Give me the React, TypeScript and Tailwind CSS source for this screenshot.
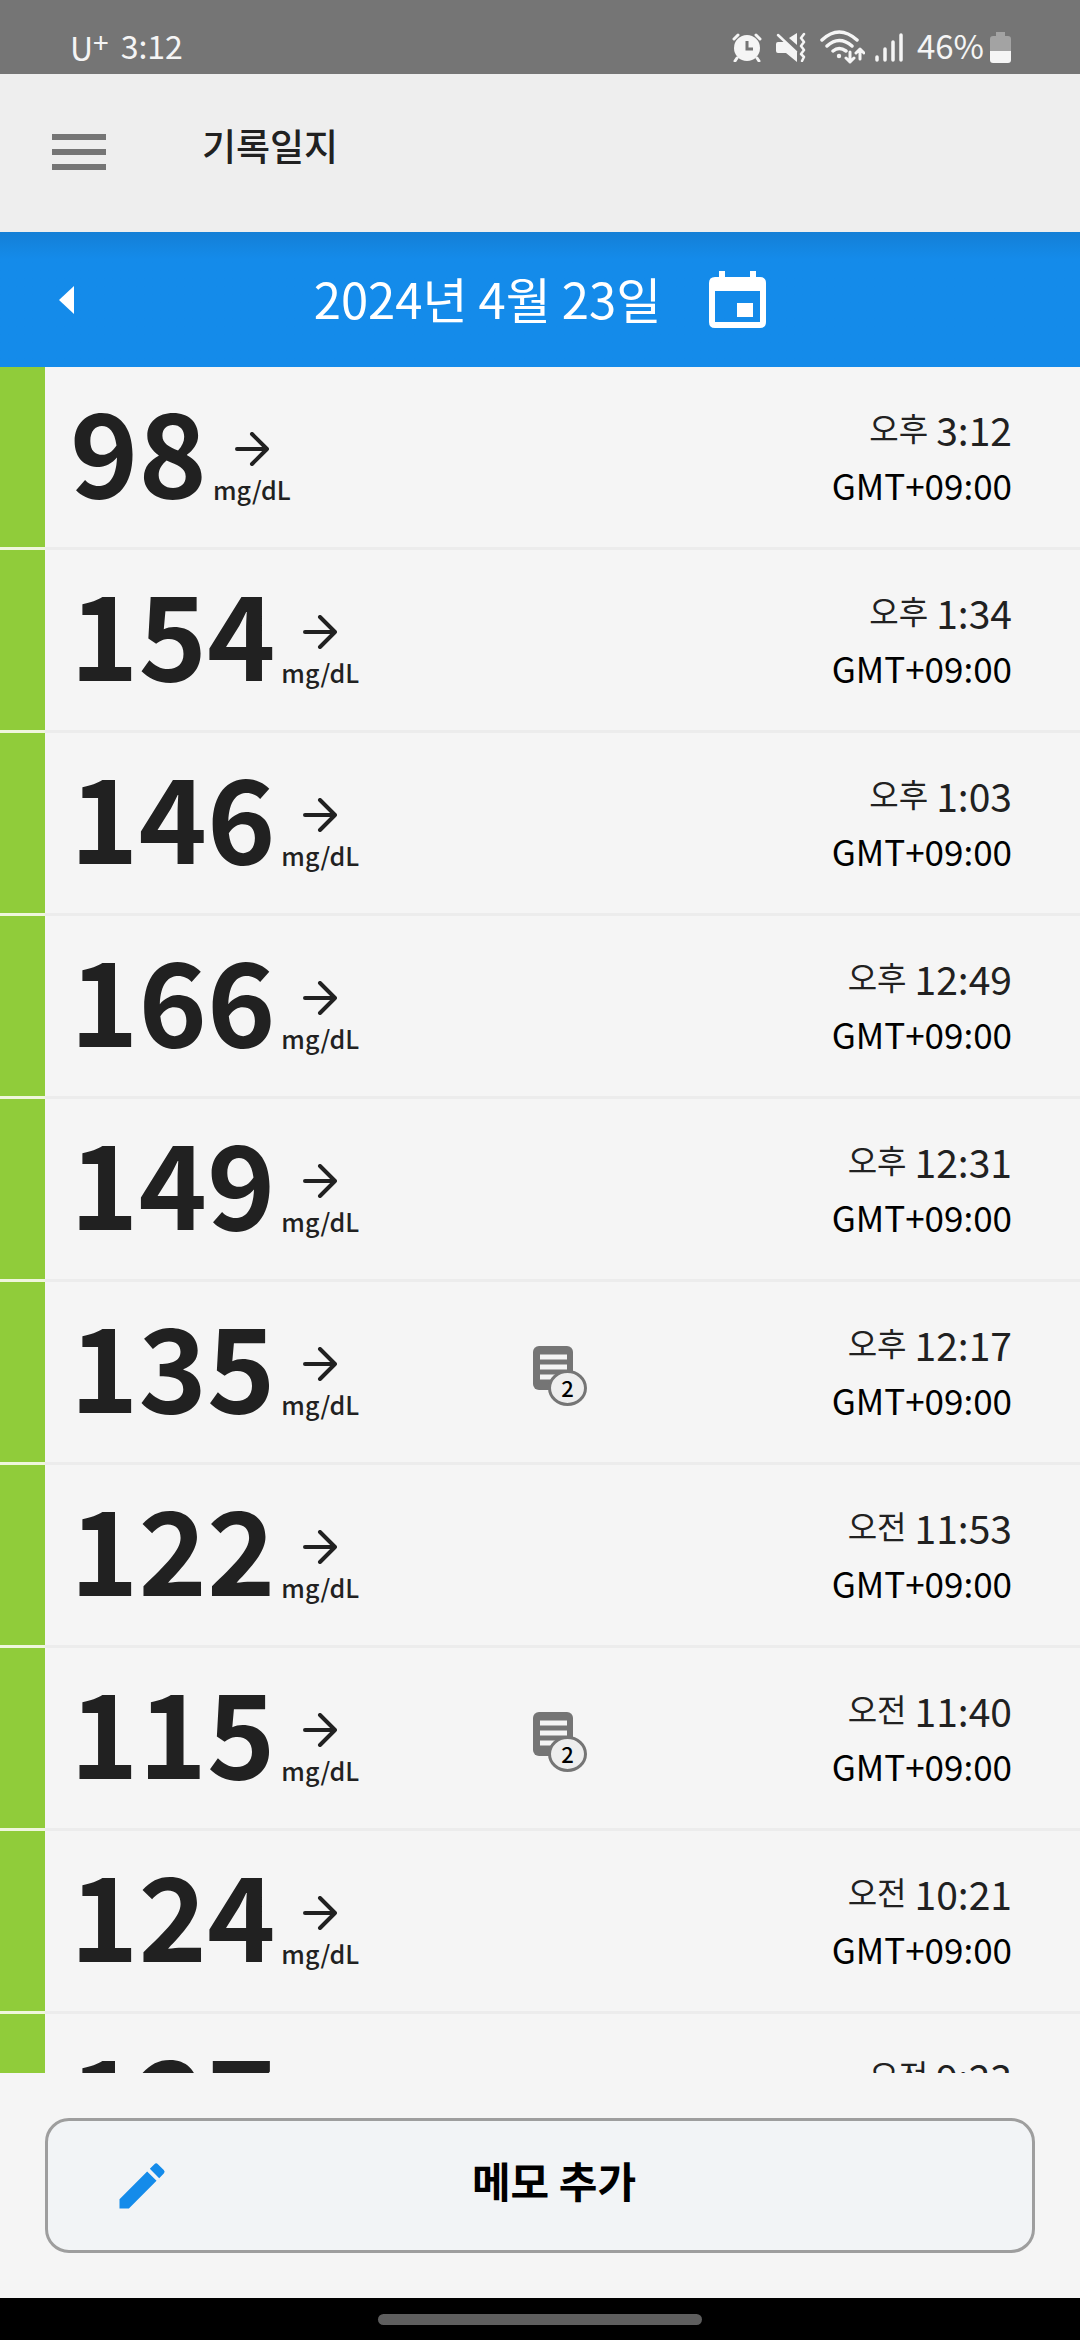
import { MdEdit } from "react-icons/md";

type Reading = {
  value: number;
  period: "오전" | "오후";
  time: string;
  notes?: number;
};

const READINGS: Reading[] = [
  { value: 98, period: "오후", time: "3:12" },
  { value: 154, period: "오후", time: "1:34" },
  { value: 146, period: "오후", time: "1:03" },
  { value: 166, period: "오후", time: "12:49" },
  { value: 149, period: "오후", time: "12:31" },
  { value: 135, period: "오후", time: "12:17", notes: 2 },
  { value: 122, period: "오전", time: "11:53" },
  { value: 115, period: "오전", time: "11:40", notes: 2 },
  { value: 124, period: "오전", time: "10:21" },
  { value: 127, period: "오전", time: "9:23" },
];

// ── Icons ────────────────────────────────────────────────────────────────────
function AlarmIcon() {
  return (
    <svg width="30" height="30" viewBox="0 0 30 30" fill="none" stroke="#f5f5f5" strokeLinecap="round">
      <circle cx="15" cy="16" r="13" fill="#f5f5f5" stroke="none" />
      <path d="M2 7l4-4M28 7l-4-4M5 26l-2 3M25 26l2 3" strokeWidth="3" />
      <path d="M15 9v8h6" stroke="#757575" strokeWidth="3" strokeLinecap="butt" />
    </svg>
  );
}

function MuteVibrateIcon() {
  return (
    <svg width="30" height="30" viewBox="0 0 30 30" fill="#f5f5f5">
      <path d="M0 12q0-2 2-2h7l12 10v10L10 21H2q-2 0-2-2z" />
      <path d="M21 1v12l-8-7z" />
      <path d="M2 3l18 17" stroke="#f5f5f5" strokeWidth="2.5" strokeLinecap="round" />
      <path d="M28 2l-3 4 3 4-3 4 3 4-3 4 3 3-2 4" fill="none" stroke="#f5f5f5" strokeWidth="2.5" strokeLinecap="round" strokeLinejoin="round" />
    </svg>
  );
}

function WifiIcon() {
  return (
    <svg width="45" height="34" viewBox="0 0 45 34" fill="none" stroke="#f5f5f5" strokeWidth="3.5" strokeLinecap="round" strokeLinejoin="round">
      <path d="M2 10q17-16 35 0M7 16q12-11 25 0M13 21q6-5 13 0" />
      <circle cx="19" cy="26" r="2.2" fill="#f5f5f5" stroke="none" />
      <path d="M30 22v10M26 28l4 4 4-4M40 29V19M36 23l4-4 4 4" strokeWidth="3" />
    </svg>
  );
}

function SignalIcon() {
  return (
    <svg width="28" height="30" viewBox="0 0 28 30" stroke="#f5f5f5" strokeWidth="3.5" strokeLinecap="round">
      <path d="M2 25v3M10 17v11M18 10v18M26 3v25" />
    </svg>
  );
}

function BatteryIcon() {
  return (
    <svg width="21" height="31" viewBox="0 0 21 31">
      <path d="M6 0h9v4h3q3 0 3 3v12H0V7q0-3 3-3h3z" fill="#a3a3a3" />
      <path d="M0 19h21v9q0 3-3 3H3q-3 0-3-3z" fill="#f5f5f5" />
    </svg>
  );
}

function CalendarIcon() {
  return (
    <svg width="57" height="58" viewBox="0 0 57 58" fill="#fff">
      <path d="M10 0h6v6h25V0h6v6h4q6 0 6 6v39q0 6-6 6H6q-6 0-6-6V12q0-6 6-6h4zM6 20v31h45V20z" fillRule="evenodd" />
      <path d="M28 32h16v14H28z" />
    </svg>
  );
}

function TrendArrow() {
  return (
    <svg width="34" height="34" viewBox="0 0 34 34" fill="none" stroke="#212121" strokeWidth="4" strokeLinecap="round" strokeLinejoin="round">
      <path d="M2 17h30M17 2l15 15-15 15" />
    </svg>
  );
}

function NotesIcon({ count }: { count: number }) {
  return (
    <span className="relative block h-[60px] w-[54px]">
      <svg width="40" height="44" viewBox="0 0 40 44">
        <rect width="40" height="44" rx="6" fill="#757575" />
        <path d="M7 11h27M7 21h27M7 31h27" stroke="#f5f5f5" strokeWidth="5" />
      </svg>
      <span className="absolute right-0 bottom-0 flex h-9 w-[39px] items-center justify-center rounded-[50%] border-3 border-[#757575] bg-[#eeeeee] pb-0.5 text-[22px] leading-none font-medium text-black">
        {count}
      </span>
    </span>
  );
}

// ── Rows ─────────────────────────────────────────────────────────────────────
function ReadingRow({ value, period, time, notes }: Reading) {
  return (
    <li className="flex h-[183px] shrink-0">
      <div className="w-[45px] border-b-3 border-[#eff6dc] bg-[#90cc3a]" />
      <div className="grid flex-1 grid-cols-[1fr_54px_425px] border-b-3 border-[#ececec] pr-[68px] pl-[25px]">
        <div className="flex">
          <span className="text-[116px] leading-[160px] font-bold">{value}</span>
          <div className="ml-1.5 flex flex-col items-center pt-[65px]">
            <TrendArrow />
            <span className="mt-1 text-[25px] leading-[38px] font-medium">mg/dL</span>
          </div>
        </div>
        <div className="flex items-center pt-2">{notes ? <NotesIcon count={notes} /> : null}</div>
        <div className="flex flex-col items-end pt-[34px]">
          <span className="flex items-center gap-2 text-[39px] leading-[56px]">
            <span className="pb-1 text-[32px] leading-[48px]">{period}</span>
            {time}
          </span>
          <span className="text-[35px] leading-[56px] text-black">GMT+09:00</span>
        </div>
      </div>
    </li>
  );
}

export default function App() {
  return (
    <div className="flex h-screen flex-col bg-[#f5f5f5] font-['Noto_Sans_CJK_KR',sans-serif] text-[#212121]">
      <div className="flex h-[74px] shrink-0 items-center justify-between bg-[#757575] pt-5 pr-[69px] pl-[70px] text-[#f5f5f5]">
        <div className="flex items-center gap-3 text-[32px] leading-none">
          <span className="flex">
            U<span className="pb-3 text-[28px] leading-5">+</span>
          </span>
          <span className="pb-1">3:12</span>
        </div>
        <div className="flex items-center gap-3.5">
          <AlarmIcon />
          <MuteVibrateIcon />
          <div className="flex items-center gap-2.5">
            <WifiIcon />
            <SignalIcon />
          </div>
          <div className="flex items-center gap-1.5">
            <span className="pb-1 text-[33px] leading-none">46%</span>
            <BatteryIcon />
          </div>
        </div>
      </div>

      <header className="flex h-[158px] shrink-0 items-center bg-[#eeeeee] pb-0.5 pl-[52px]">
        <button type="button" aria-label="메뉴" className="flex flex-col gap-[9px]">
          <span className="h-1.5 w-[54px] bg-[#757575]" />
          <span className="h-1.5 w-[54px] bg-[#757575]" />
          <span className="h-1.5 w-[54px] bg-[#757575]" />
        </button>
        <h1 className="ml-24 pb-3 text-[37px] font-medium">기록일지</h1>
      </header>

      <nav className="grid h-[135px] shrink-0 grid-cols-[1fr_auto_1fr] items-center bg-[#148bea] bg-linear-to-b from-[#147fd6] to-[#148bea] to-20% px-[59px] text-white">
        <button type="button" aria-label="이전 날짜" className="justify-self-start">
          <svg width="15" height="28" viewBox="0 0 15 28" fill="#fff">
            <path d="M15 0v28L0 14z" />
          </svg>
        </button>
        <button type="button" className="flex items-center gap-12">
          <span className="pb-1 text-[49px] leading-none">2024년 4월 23일</span>
          <CalendarIcon />
        </button>
      </nav>

      <ul className="flex min-h-0 flex-1 flex-col overflow-hidden">
        {READINGS.map((r) => (
          <ReadingRow key={r.time} {...r} />
        ))}
      </ul>

      <div className="shrink-0 px-[45px] py-[45px]">
        <button
          type="button"
          className="grid h-[135px] w-full grid-cols-[1fr_auto_1fr] items-center rounded-3xl border-3 border-[#9e9e9e] bg-[#f2f4f6] pr-9 pl-16 text-black"
        >
          <MdEdit className="size-[60px] text-[#148bea]" />
          <span className="pb-3 text-[42px] leading-none font-bold">메모 추가</span>
        </button>
      </div>

      <div className="flex h-[42px] shrink-0 items-center justify-center bg-black">
        <span className="h-[11px] w-3/10 rounded-full bg-[#5e5e5e]" />
      </div>
    </div>
  );
}
